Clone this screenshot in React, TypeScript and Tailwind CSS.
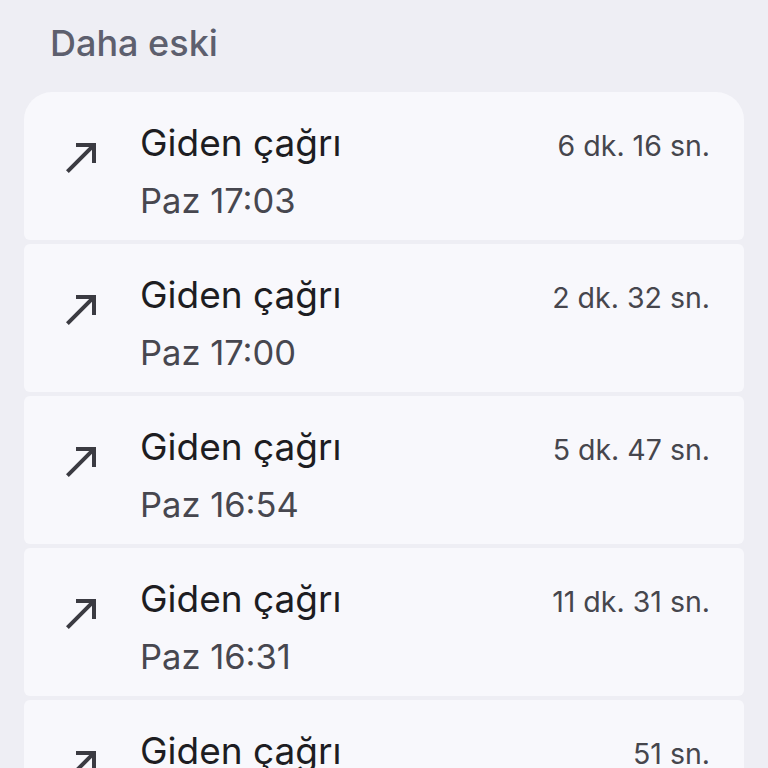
import React from "react";

type Call = { time: string; duration: string };

const calls: Call[] = [
  { time: "Paz 17:03", duration: "6 dk. 16 sn." },
  { time: "Paz 17:00", duration: "2 dk. 32 sn." },
  { time: "Paz 16:54", duration: "5 dk. 47 sn." },
  { time: "Paz 16:31", duration: "11 dk. 31 sn." },
  { time: "Paz 16:20", duration: "51 sn." },
];

function CallMadeIcon() {
  return (
    <svg width="48" height="48" viewBox="0 0 24 24" className="shrink-0">
      <path d="M9 5v2h6.59L4 18.59 5.41 20 17 8.41V15h2V5z" fill="#3b3b42" />
    </svg>
  );
}

function CallRow({ call, first }: { call: Call; first: boolean }) {
  return (
    <div
      className={
        "h-[148px] shrink-0 bg-[#f8f8fc] flex items-start pt-[29px] pl-[34px] pr-[34px] " +
        (first ? "rounded-t-[28px] rounded-b-[6px]" : "rounded-[6px]")
      }
    >
      <div className="mt-[12px]">
        <CallMadeIcon />
      </div>
      <div className="ml-[34px] flex-1 flex flex-col">
        <div className="flex items-baseline justify-between">
          <span className="text-[37px] leading-[44px] text-[#1d1d22]">Giden çağrı</span>
          <span className="text-[28.5px] leading-[44px] text-[#46464d]">{call.duration}</span>
        </div>
        <span className="mt-[13px] text-[34.5px] leading-[40px] text-[#47474f]">{call.time}</span>
      </div>
    </div>
  );
}

export default function App() {
  return (
    <main className="h-[768px] overflow-hidden bg-[#eeeef4] px-6 font-['Inter',sans-serif]">
      <div className="h-[92px] pl-[26px] pt-[21px]">
        <h2 className="text-[36px] leading-[44px] font-medium text-[#5d5f6e]">Daha eski</h2>
      </div>
      <div className="flex flex-col gap-[4px]">
        {calls.map((c, i) => (
          <CallRow key={i} call={c} first={i === 0} />
        ))}
      </div>
    </main>
  );
}
